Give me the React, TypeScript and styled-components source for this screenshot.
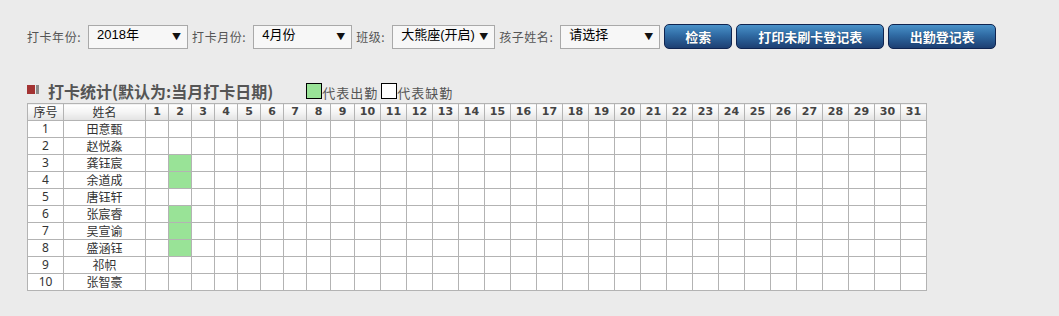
import React from "react";
import styled, { createGlobalStyle } from "styled-components";

const Global = createGlobalStyle`
  html, body { margin: 0; padding: 0; background: #ebebeb; }
  body { font-family: "Noto Sans CJK SC", "DejaVu Sans", sans-serif; }
`;

const Page = styled.div`
  padding: 24px 0 0 27px;
`;

const Toolbar = styled.div`
  display: flex;
  align-items: center;
  gap: 4px;
  height: 25px;
`;

const Label = styled.span`
  font-size: 12px;
  letter-spacing: 0.55px;
  color: #555;
  white-space: nowrap;
  margin-right: 3px;
`;

const SelectBox = styled.div<{ $w: number }>`
  position: relative;
  width: ${(p) => p.$w}px;
  height: 24px;
  box-sizing: border-box;
  border: 1px solid #a9a9a9;
  background: #f7f7f7;
`;

const NativeSelect = styled.select`
  appearance: none;
  -webkit-appearance: none;
  display: block;
  border: none;
  outline: none;
  background: transparent;
  width: 100%;
  height: 22px;
  line-height: 18px;
  padding: 0 0 4px 8px;
  font-family: "Liberation Sans", "Noto Sans CJK SC", sans-serif;
  font-size: 13px;
  color: #000;
`;

const Arrow = styled.span`
  position: absolute;
  right: 6px;
  top: 4px;
  font-size: 9px;
  color: #111;
  pointer-events: none;
`;

const Button = styled.button<{ $w: number }>`
  width: ${(p) => p.$w}px;
  height: 25px;
  box-sizing: border-box;
  border: 1px solid #0f2450;
  border-radius: 5px;
  background: linear-gradient(to bottom, #4a92c9 0%, #2f6aa3 45%, #1d3f72 100%);
  color: #fff;
  font-family: "Noto Sans CJK SC", sans-serif;
  font-weight: bold;
  font-size: 13px;
  padding: 0;
  cursor: pointer;
  text-shadow: 0 0 1px rgba(0, 0, 0, 0.4);
`;

const TitleRow = styled.div`
  display: flex;
  align-items: flex-end;
  margin-top: 32px;
  height: 20px;
`;

const TitleIcon = styled.span`
  display: flex;
  gap: 1px;
  align-self: center;
  margin-right: 9px;
  margin-bottom: 3px;
`;

const IconRed = styled.span`
  width: 8px;
  height: 9px;
  background: #a33333;
`;

const IconGray = styled.span`
  width: 3px;
  height: 9px;
  background: #8a8a8a;
`;

const Title = styled.span`
  font-size: 16px;
  font-weight: bold;
  color: #555;
  line-height: 20px;
`;

const Legend = styled.div`
  display: flex;
  align-items: flex-end;
  margin-left: 33px;
`;

const Swatch = styled.span<{ $c: string }>`
  width: 16px;
  height: 16px;
  box-sizing: border-box;
  border: 1px solid #000;
  background: ${(p) => p.$c};
  margin-bottom: 2px;
`;

const LegendText = styled.span`
  font-size: 13px;
  letter-spacing: 1px;
  color: #555;
  line-height: 17px;
  margin-right: 3px;
`;

const Table = styled.table`
  margin-top: 2px;
  border-collapse: collapse;
  table-layout: fixed;
  width: 899px;
  background: #fff;
`;

const HeadCell = styled.th`
  height: 16px;
  padding: 0;
  border: 1px solid #b3b3b3;
  background: linear-gradient(to bottom, #ffffff 0%, #f4f4f4 50%, #e2e2e2 100%);
  font-family: "DejaVu Sans", "Noto Sans CJK SC", sans-serif;
  font-size: 11px;
  font-weight: bold;
  color: #444;
  line-height: 16px;
  text-align: center;
`;

const HeadCellCjk = styled(HeadCell)`
  font-family: "Noto Sans CJK SC", sans-serif;
  font-size: 12px;
  font-weight: normal;
  color: #333;
`;

const Cell = styled.td<{ $on?: boolean }>`
  height: 16px;
  padding: 0;
  border: 1px solid #b3b3b3;
  background: ${(p) => (p.$on ? "#99e397" : "#fff")};
  font-family: "Noto Sans CJK SC", sans-serif;
  font-size: 12px;
  color: #333;
  line-height: 16px;
  text-align: center;
`;

const NumCell = styled(Cell)`
  font-family: "Noto Sans", "DejaVu Sans", sans-serif;
`;

const days = Array.from({ length: 31 }, (_, i) => i + 1);
const dayWidth = (d: number) => (d <= 7 ? 23 : d <= 9 ? 24 : 26);

const rows: { name: string; present: number[] }[] = [
  { name: "田意甄", present: [] },
  { name: "赵悦淼", present: [] },
  { name: "龚钰宸", present: [2] },
  { name: "余道成", present: [2] },
  { name: "唐钰轩", present: [] },
  { name: "张宸睿", present: [2] },
  { name: "吴宣谕", present: [2] },
  { name: "盛涵钰", present: [2] },
  { name: "祁帜", present: [] },
  { name: "张智豪", present: [] },
];

function Select({ w, value, options }: { w: number; value: string; options: string[] }) {
  return (
    <SelectBox $w={w}>
      <NativeSelect defaultValue={value}>
        {options.map((o) => (
          <option key={o} value={o}>
            {o}
          </option>
        ))}
      </NativeSelect>
      <Arrow>▼</Arrow>
    </SelectBox>
  );
}

export default function App() {
  return (
    <Page>
      <Global />
      <Toolbar>
        <Label>打卡年份:</Label>
        <Select w={100} value="2018年" options={["2017年", "2018年", "2019年"]} />
        <Label>打卡月份:</Label>
        <Select w={99} value="4月份" options={["3月份", "4月份", "5月份"]} />
        <Label>班级:</Label>
        <Select w={103} value="大熊座(开启)" options={["大熊座(开启)"]} />
        <Label>孩子姓名:</Label>
        <Select w={100} value="请选择" options={["请选择"]} />
        <Button $w={68}>检索</Button>
        <Button $w={148}>打印未刷卡登记表</Button>
        <Button $w={108}>出勤登记表</Button>
      </Toolbar>
      <TitleRow>
        <TitleIcon>
          <IconRed />
          <IconGray />
        </TitleIcon>
        <Title>打卡统计(默认为:当月打卡日期)</Title>
        <Legend>
          <Swatch $c="#99e397" />
          <LegendText>代表出勤</LegendText>
          <Swatch $c="#fff" />
          <LegendText>代表缺勤</LegendText>
        </Legend>
      </TitleRow>
      <Table>
        <colgroup>
          <col style={{ width: 36 }} />
          <col style={{ width: 82 }} />
          {days.map((d) => (
            <col key={d} style={{ width: dayWidth(d) }} />
          ))}
        </colgroup>
        <thead>
          <tr>
            <HeadCellCjk>序号</HeadCellCjk>
            <HeadCellCjk>姓名</HeadCellCjk>
            {days.map((d) => (
              <HeadCell key={d}>{d}</HeadCell>
            ))}
          </tr>
        </thead>
        <tbody>
          {rows.map((r, i) => (
            <tr key={i}>
              <NumCell>{i + 1}</NumCell>
              <Cell>{r.name}</Cell>
              {days.map((d) => (
                <Cell key={d} $on={r.present.includes(d)} />
              ))}
            </tr>
          ))}
        </tbody>
      </Table>
    </Page>
  );
}
